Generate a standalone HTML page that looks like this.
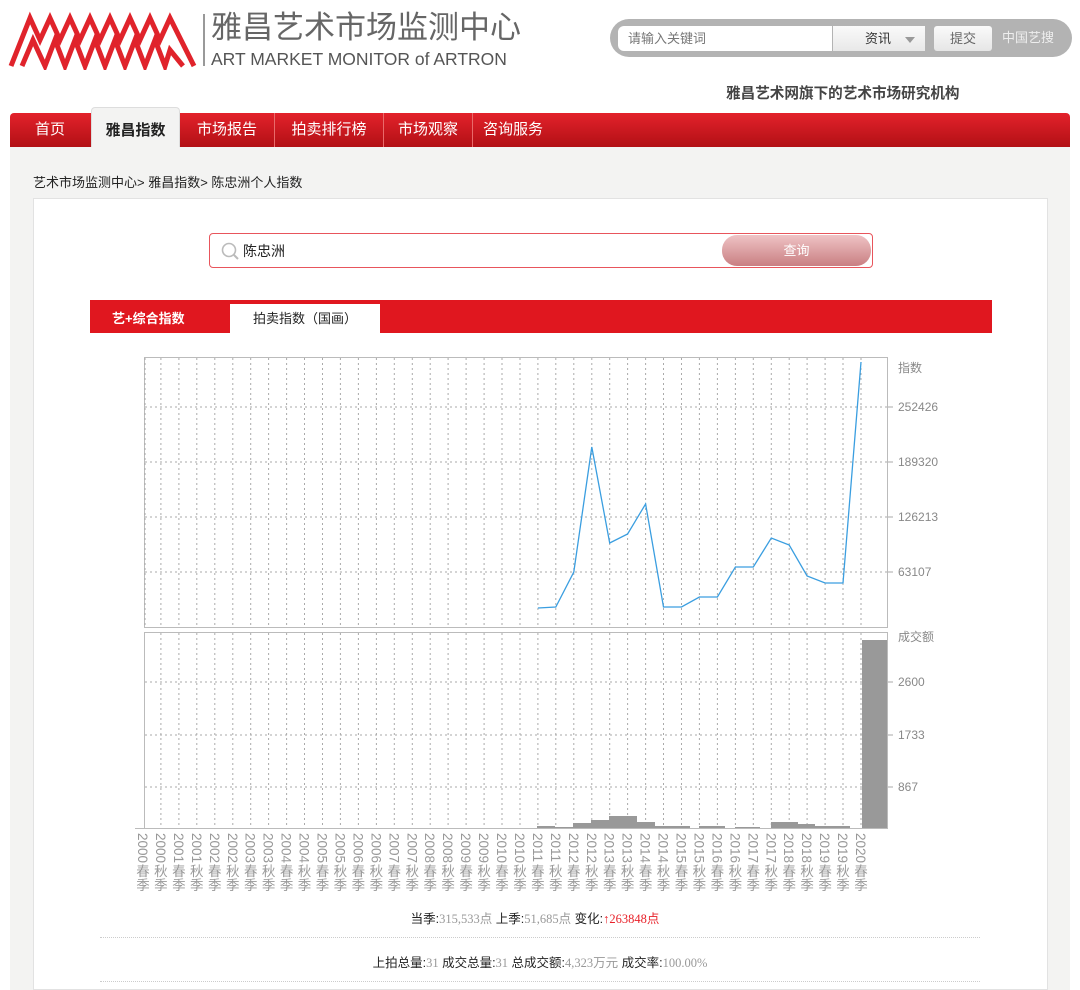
<!DOCTYPE html>
<html><head><meta charset="utf-8">
<style>
*{margin:0;padding:0;box-sizing:border-box}
body{width:1080px;height:990px;overflow:hidden;background:#fff;font-family:"Liberation Sans","Noto Sans CJK SC",sans-serif;position:relative}
.abs{position:absolute}
.nav{left:10px;top:113px;width:1060px;height:34px;background:linear-gradient(#e3222b,#b21015);border-radius:4px 4px 0 0}
.nav span{position:absolute;top:0;height:34px;line-height:34px;color:#fff;font-size:15px;text-align:center;border-right:1px solid #e96a6a}
.gray{left:10px;top:147px;width:1060px;height:843px;background:#f3f3f2}
.panel{left:33px;top:198px;width:1015px;height:792px;background:#fff;border:1px solid #e2e2e2}
</style></head><body>
<svg class="abs" style="left:8px;top:10px" width="192" height="60" viewBox="0 0 192 60">
<path d="M3 56 L22 8 L32 30 L42 8 L52 30 L62 8 L72 30 L82 8 L92 30 L102 8 L112 30 L122 8 L132 30 L142 8 L152 30 L162 8 L186 56" fill="none" stroke="#e0232b" stroke-width="5" stroke-linejoin="miter"/>
<path d="M14 56 L25 30 L37 56 L47 30 L57 56 L67 30 L77 56 L87 30 L97 56 L107 30 L117 56 L127 30 L137 56 L147 30 L157 56 L162 40 L175 56" fill="none" stroke="#e0232b" stroke-width="5"/>
</svg>
<div class="abs" style="left:203px;top:14px;width:2px;height:52px;background:#999"></div>
<div class="abs" style="left:211px;top:10px;font-size:31px;color:#666;white-space:nowrap;line-height:36px">雅昌艺术市场监测中心</div>
<div class="abs" style="left:211px;top:49px;font-size:17.5px;color:#555;white-space:nowrap;line-height:20px">ART MARKET MONITOR of ARTRON</div>

<div class="abs" style="left:610px;top:19px;width:462px;height:38px;background:#b3b3b3;border-radius:19px"></div>
<div class="abs" style="left:618px;top:26px;width:214px;height:25px;background:#fff;border-radius:6px 0 0 6px;font-size:13px;color:#777;line-height:25px;padding-left:10px">请输入关键词</div>
<div class="abs" style="left:833px;top:26px;width:92px;height:25px;background:linear-gradient(#fafafa,#e8e8e8);font-size:13px;color:#333;line-height:25px;padding-left:32px">资讯<span style="position:absolute;left:72px;top:11px;border:5px solid transparent;border-top:6px solid #999;border-bottom:0"></span></div>
<div class="abs" style="left:934px;top:26px;width:58px;height:25px;background:linear-gradient(#fafafa,#e6e6e6);border-radius:3px;font-size:13px;color:#666;line-height:25px;text-align:center">提交</div>
<div class="abs" style="left:1002px;top:29px;font-size:13px;color:#eee;line-height:18px">中国艺搜</div>
<div class="abs" style="left:726px;top:82px;font-size:14.6px;color:#444;font-weight:bold;white-space:nowrap">雅昌艺术网旗下的艺术市场研究机构</div>

<div class="abs nav">
<span style="left:0;width:80px;border:none">首页</span>
<span style="left:81px;width:89px;top:-6px;height:40px;line-height:46px;background:#f3f3f2;color:#222;border:1px solid #ddd;border-bottom:none;border-radius:4px 4px 0 0;font-weight:bold">雅昌指数</span>
<span style="left:170px;width:95px">市场报告</span>
<span style="left:265px;width:109px">拍卖排行榜</span>
<span style="left:374px;width:89px">市场观察</span>
<span style="left:463px;width:80px;border:none">咨询服务</span>
</div>
<div class="abs gray"></div>
<div class="abs" style="left:33px;top:172px;font-size:13px;color:#222">艺术市场监测中心&gt; 雅昌指数&gt; 陈忠洲个人指数</div>
<div class="abs panel"></div>

<div class="abs" style="left:209px;top:233px;width:664px;height:35px;border:1px solid #e8555c;border-radius:4px;background:#fff"></div>
<svg class="abs" style="left:220px;top:241px" width="22" height="20"><circle cx="9" cy="9" r="6.5" fill="none" stroke="#bbb" stroke-width="1.6"/><path d="M14 14 L18 18" stroke="#bbb" stroke-width="2"/></svg>
<div class="abs" style="left:243px;top:241px;font-size:14px;color:#222">陈忠洲</div>
<div class="abs" style="left:722px;top:235px;width:149px;height:31px;border-radius:15px;background:linear-gradient(#efc3c5,#c97f82);color:#fff;font-size:13px;text-align:center;line-height:31px">查询</div>

<div class="abs" style="left:90px;top:300px;width:902px;height:33px;background:#e0171f"></div>
<div class="abs" style="left:112px;top:308px;font-size:13px;color:#fff;font-weight:bold">艺+综合指数</div>
<div class="abs" style="left:230px;top:304px;width:150px;height:29px;background:#fff;font-size:13px;color:#222;text-align:center;line-height:29px">拍卖指数（国画）</div>

<svg id="ch" class="abs" style="left:0;top:0" width="1080" height="990"></svg>

<div class="abs" style="left:0;width:1070px;top:908px;text-align:center;font-size:12.5px;color:#222">当季:<span style="color:#999;font-family:'Liberation Serif',serif">315,533点</span> 上季:<span style="color:#999;font-family:'Liberation Serif',serif">51,685点</span> 变化:<span style="color:#e8222a;font-family:'Liberation Serif',serif">↑263848点</span></div>
<div class="abs" style="left:100px;top:937px;width:880px;border-top:1px dotted #ccc"></div>
<div class="abs" style="left:0;width:1080px;top:952px;text-align:center;font-size:12.5px;color:#222">上拍总量:<span style="color:#999;font-family:'Liberation Serif',serif">31</span> 成交总量:<span style="color:#999;font-family:'Liberation Serif',serif">31</span> 总成交额:<span style="color:#999;font-family:'Liberation Serif',serif">4,323万元</span> 成交率:<span style="color:#999;font-family:'Liberation Serif',serif">100.00%</span></div>
<div class="abs" style="left:100px;top:981px;width:880px;border-top:1px dotted #ccc"></div>

<script>
var s='';
function X(i){return 143+17.95*i}
s+='<rect x="144.5" y="357.5" width="743" height="270" fill="#fff" stroke="#bbb"/>';
s+='<rect x="144.5" y="632.5" width="743" height="196" fill="#fff" stroke="#bbb"/>';
for(var i=1;i<=40;i++){var x=X(i).toFixed(1);
s+='<line x1="'+x+'" y1="358" x2="'+x+'" y2="627" stroke="#aaa" stroke-dasharray="2,3"/>';
s+='<line x1="'+x+'" y1="633" x2="'+x+'" y2="828" stroke="#aaa" stroke-dasharray="2,3"/>';}
s+='<line x1="145" y1="358" x2="145" y2="627" stroke="#aaa" stroke-dasharray="2,3"/>';
[[407,'252426'],[462,'189320'],[517,'126213'],[572,'63107']].forEach(function(g){
s+='<line x1="145" y1="'+g[0]+'" x2="888" y2="'+g[0]+'" stroke="#aaa" stroke-dasharray="2,3"/><line x1="888" y1="'+g[0]+'" x2="893" y2="'+g[0]+'" stroke="#aaa"/>';
s+='<text x="898" y="'+(g[0]+4)+'" font-size="12" fill="#888" font-family="Liberation Sans">'+g[1]+'</text>';});
s+='<text x="898" y="372" font-size="12" fill="#888" font-family="Noto Sans CJK SC">指数</text>';
[[682,'2600'],[735,'1733'],[787,'867']].forEach(function(g){
s+='<line x1="145" y1="'+g[0]+'" x2="888" y2="'+g[0]+'" stroke="#aaa" stroke-dasharray="2,3"/><line x1="888" y1="'+g[0]+'" x2="893" y2="'+g[0]+'" stroke="#aaa"/>';
s+='<text x="898" y="'+(g[0]+4)+'" font-size="12" fill="#888" font-family="Liberation Sans">'+g[1]+'</text>';});
s+='<text x="898" y="641" font-size="12" fill="#888" font-family="Noto Sans CJK SC">成交额</text>';
var ys=[608,607,572,447,543,534,504,607,607,597,597,567,567,538,545,576,583,583,362];
var p=ys.map(function(y,k){return X(22+k).toFixed(1)+','+y}).join(' ');
s+='<polyline points="'+p+'" fill="none" stroke="#3a9ee0" stroke-width="1.3"/>';
[[537,555,826],[555,573,827],[573,591,823],[591,609,820],[609,637,816],[637,655,822],[655,690,826],[699,725,826],[735,760,827],[771,798,822],[798,815,824],[815,850,826],[862,887,640]].forEach(function(b){
s+='<rect x="'+b[0]+'" y="'+b[2]+'" width="'+(b[1]-b[0])+'" height="'+(828-b[2])+'" fill="#999"/>';});
s+='<line x1="135" y1="828.5" x2="888" y2="828.5" stroke="#bbb"/>';
for(var i=0;i<41;i++){var yr=2000+Math.floor(i/2);var x=X(i);
s+='<text transform="translate('+(x-5).toFixed(1)+',833) rotate(90)" font-size="13.5" fill="#999" font-family="Liberation Sans">'+yr+'</text>';
s+='<text x="'+x.toFixed(1)+'" y="876" text-anchor="middle" font-size="13.5" fill="#999" font-family="Noto Sans CJK SC">'+(i%2?'秋':'春')+'</text>';
s+='<text x="'+x.toFixed(1)+'" y="890" text-anchor="middle" font-size="13.5" fill="#999" font-family="Noto Sans CJK SC">季</text>';}
document.getElementById('ch').innerHTML=s;
</script>
</body></html>
